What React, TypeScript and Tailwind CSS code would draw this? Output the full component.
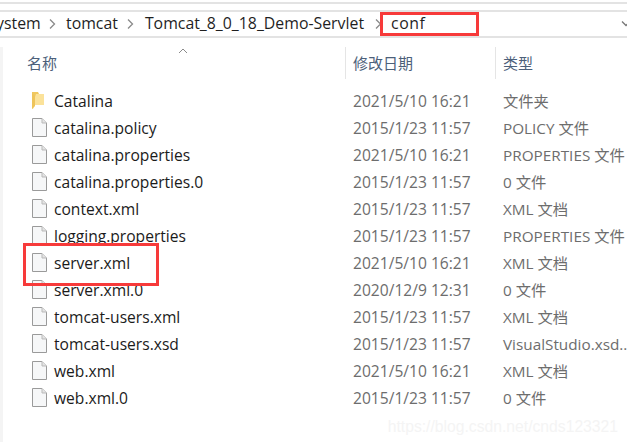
const files = [
  { name: "Catalina", date: "2021/5/10 16:21", type: "文件夹", folder: true },
  { name: "catalina.policy", date: "2015/1/23 11:57", type: "POLICY 文件" },
  { name: "catalina.properties", date: "2021/5/10 16:21", type: "PROPERTIES 文件" },
  { name: "catalina.properties.0", date: "2015/1/23 11:57", type: "0 文件" },
  { name: "context.xml", date: "2015/1/23 11:57", type: "XML 文档" },
  { name: "logging.properties", date: "2015/1/23 11:57", type: "PROPERTIES 文件" },
  { name: "server.xml", date: "2021/5/10 16:21", type: "XML 文档" },
  { name: "server.xml.0", date: "2020/12/9 12:31", type: "0 文件" },
  { name: "tomcat-users.xml", date: "2015/1/23 11:57", type: "XML 文档" },
  { name: "tomcat-users.xsd", date: "2015/1/23 11:57", type: "VisualStudio.xsd..." },
  { name: "web.xml", date: "2021/5/10 16:21", type: "XML 文档" },
  { name: "web.xml.0", date: "2015/1/23 11:57", type: "0 文件" },
];

const fontStack = '"Open Sans", "Noto Sans CJK SC", sans-serif';

function FileIcon() {
  return (
    <svg width="15" height="20" viewBox="0 0 15 20" className="shrink-0">
      <path d="M.5 .5H10L14.5 5V18.5H.5Z" fill="#f6f7f8" stroke="#9a9a9a" />
      <path d="M10 .5V5H14.5" fill="#e4e4e4" stroke="#b9b9b9" />
    </svg>
  );
}

function FolderIcon() {
  return (
    <svg width="15" height="20" viewBox="0 0 15 20" className="shrink-0">
      <path d="M0 1H6L7 3H12V14H0Z" fill="#f0c860" />
      <path d="M4 3H12V14L3 14L1 18H0V15Z" fill="#fbe29a" />
      <path d="M0 2V18L3 15V5Z" fill="#eec45a" />
    </svg>
  );
}

function Chevron() {
  return (
    <svg width="8" height="12" viewBox="0 0 8 12" className="shrink-0">
      <path d="M2 1.5L6.5 6L2 10.5" fill="none" stroke="#8a8a8a" strokeWidth="1.3" />
    </svg>
  );
}

export default function App() {
  return (
    <div
      className="relative h-[442px] w-[627px] overflow-hidden bg-white text-[15px]"
      style={{ fontFamily: fontStack }}
    >
      {/* top strip */}
      <div className="mt-[2px] h-[8px] border-t-2 border-[#e3e3e3]" />

      {/* address bar */}
      <div className="flex h-[28px] items-center whitespace-nowrap border-y-2 border-[#e3e3e3] text-[15.85px] text-[#1f1f1f]">
        <span className="ml-[-4px] w-[52px] shrink-0">ystem</span>
        <Chevron />
        <span className="ml-[10px]">tomcat</span>
        <span className="ml-[8px]"><Chevron /></span>
        <span className="ml-[11px]">Tomcat_8_0_18_Demo-Servlet</span>
        <span className="ml-[10px]"><Chevron /></span>
        <span className="ml-[9px] tracking-[0.5px]">conf</span>
        <svg width="10" height="8" viewBox="0 0 10 8" className="ml-auto mr-[-4px] shrink-0">
          <path d="M1 1.5L5 5.5L9 1.5" fill="none" stroke="#777" strokeWidth="1.3" />
        </svg>
      </div>

      {/* file pane, thin edge of the nav pane on the left */}
      <div className="mt-[9px] border-l-[3px] border-[#f4f4f4]">
        <div className="relative flex h-[32px] items-center text-[#4c607a]">
          <span className="ml-[24px] w-[318px] shrink-0">名称</span>
          <div className="h-[32px] w-px bg-[#e5e5e5]" />
          <span className="ml-[7px] w-[142px] shrink-0">修改日期</span>
          <div className="h-[32px] w-px bg-[#e5e5e5]" />
          <span className="ml-[7px]">类型</span>
          <svg width="10" height="6" viewBox="0 0 10 6" className="absolute left-[175px] top-[1px]">
            <path d="M1 5L5 1L9 5" fill="none" stroke="#8a8a8a" />
          </svg>
        </div>

        <div className="mt-[9px] h-[354px]">
          {files.map((f) => (
            <div key={f.name} className="flex h-[27px] items-center whitespace-nowrap">
              <div className="ml-[29px] flex w-[321px] shrink-0 items-center gap-[7px] text-[15.6px] text-[#1b1b1b]">
                {f.folder ? <FolderIcon /> : <FileIcon />}
                <span>{f.name}</span>
              </div>
              <span className="w-[150px] shrink-0 text-[15.6px] text-[#6d6d6d]">{f.date}</span>
              <span className="text-[15.3px] text-[#6d6d6d]">{f.type}</span>
            </div>
          ))}
        </div>
      </div>

      {/* red callouts */}
      <div className="absolute left-[380px] top-[12px] h-[24px] w-[99px] border-[3px] border-[#f73a3a]" />
      <div className="absolute left-[23px] top-[243px] h-[43px] w-[136px] border-[3px] border-[#f73a3a]" />

      {/* watermark */}
      <span
        className="absolute right-[9px] top-[415px] whitespace-nowrap text-[15.7px] text-[#f4f4f4]"
        style={{ fontFamily: '"Liberation Sans", sans-serif' }}
      >
        https://blog.csdn.net/cnds123321
      </span>
    </div>
  );
}
